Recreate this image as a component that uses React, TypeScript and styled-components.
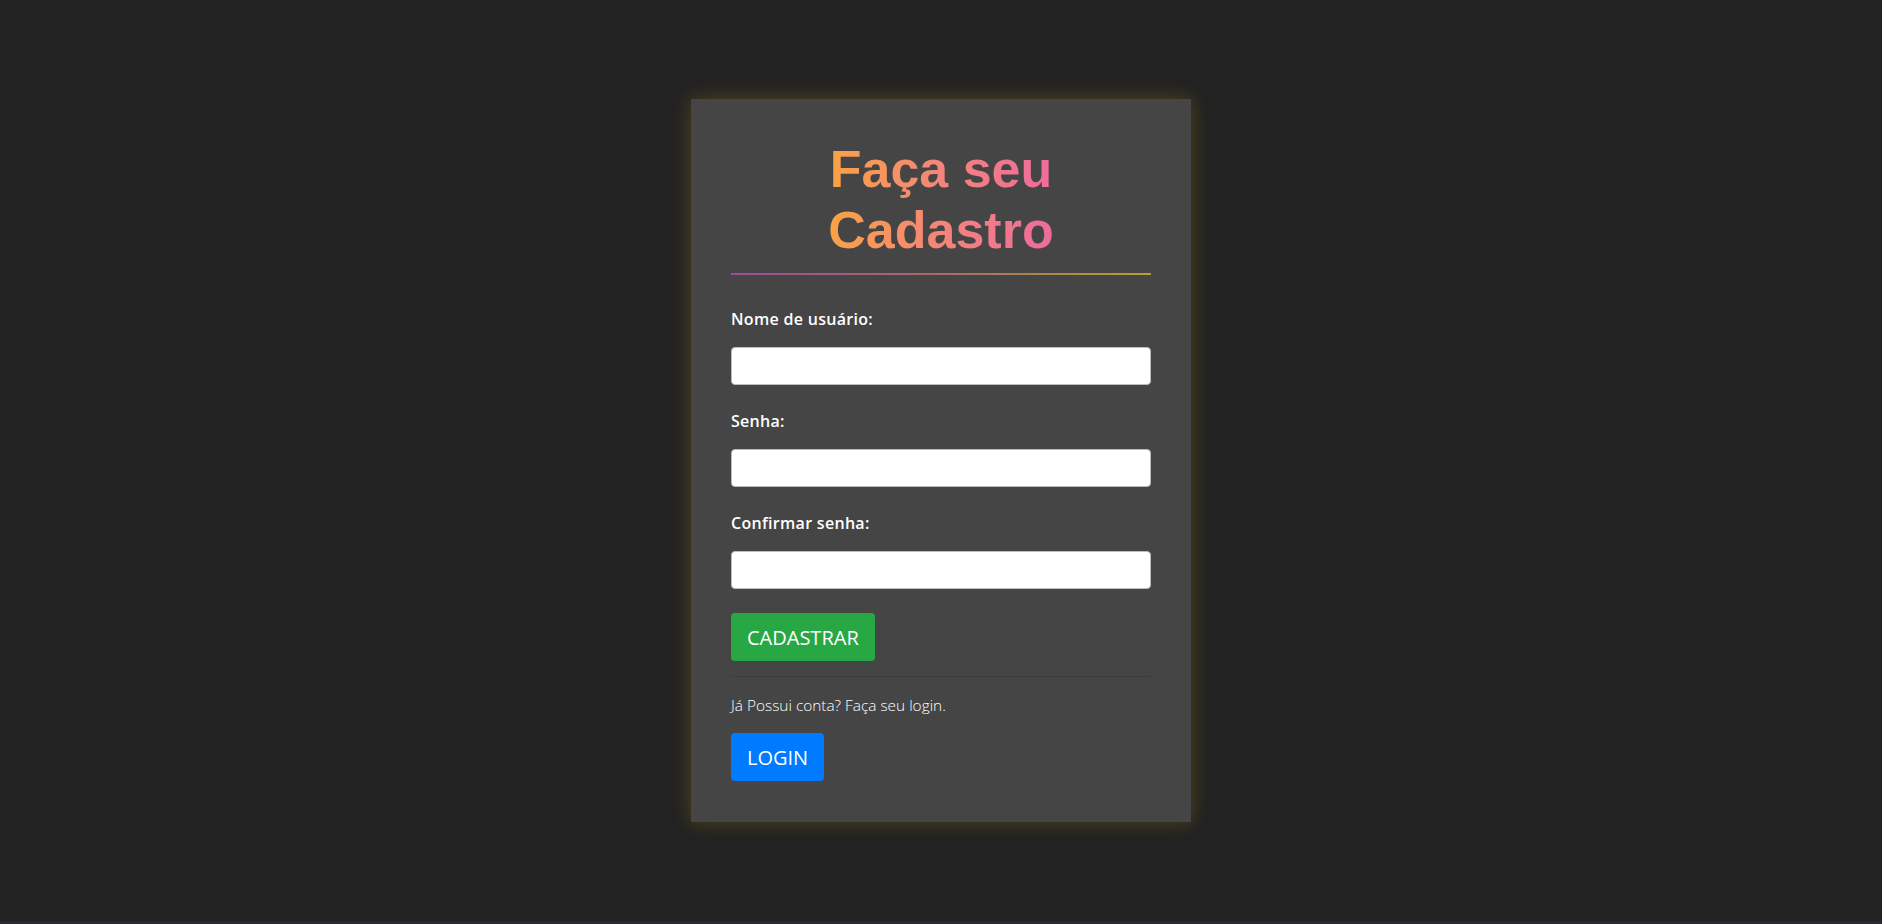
import React from "react";
import styled, { createGlobalStyle } from "styled-components";

const Global = createGlobalStyle`
  html, body { margin: 0; padding: 0; background: #2b2a33; }
  body { font-family: "Open Sans", "Noto Sans", sans-serif; }
  * { box-sizing: border-box; }
`;

const Page = styled.main`
  height: 921px;
  background: #222222;
  display: flex;
  align-items: center;
  justify-content: center;
`;

const Card = styled.section`
  width: 500px;
  padding: 40px 40px 41px;
  background: #454545;
  box-shadow: 0 0 18px rgba(255, 204, 0, 0.22);
  display: flex;
  flex-direction: column;
`;

const Title = styled.h1`
  margin: 0 auto;
  width: fit-content;
  max-width: 300px;
  font-family: "Liberation Sans", Arial, sans-serif;
  font-weight: 700;
  font-size: 52px;
  line-height: 61px;
  text-align: center;
  background: linear-gradient(90deg, #fbad33 0%, #f3857a 50%, #ec63a9 100%);
  -webkit-background-clip: text;
  background-clip: text;
  color: transparent;
`;

const TitleRule = styled.div`
  height: 2px;
  margin-top: 12px;
  margin-bottom: 32px;
  background: linear-gradient(90deg, #9c4d99 0%, #a86a6a 50%, #b5a12c 100%);
`;

const Field = styled.div`
  display: flex;
  flex-direction: column;
  margin-bottom: 24px;
`;

const Label = styled.label`
  color: #ffffff;
  font-size: 16px;
  line-height: 24px;
  font-weight: 600;
  letter-spacing: 0.3px;
  margin-bottom: 16px;
`;

const Input = styled.input`
  height: 38px;
  width: 100%;
  border: 1px solid #b9bdc2;
  border-radius: 4px;
  background: #ffffff;
  padding: 6px 12px;
  font-size: 16px;
  outline: none;
`;

const Button = styled.button<{ $tone: "green" | "blue" }>`
  align-self: flex-start;
  height: 48px;
  padding: 0 16px;
  border: none;
  border-radius: 4px;
  background: ${(p) => (p.$tone === "green" ? "#28a745" : "#007bff")};
  color: #ffffff;
  font-family: "Open Sans", "Noto Sans", sans-serif;
  font-size: 20px;
  font-weight: 400;
  cursor: pointer;
`;

const Divider = styled.hr`
  margin: 15px 0 18px;
  border: 0;
  border-top: 1px solid rgba(0, 0, 0, 0.1);
`;

const Hint = styled.p`
  margin: 0 0 16px;
  color: #ffffff;
  font-size: 15.4px;
  line-height: 22px;
  font-weight: 300;
`;

export default function App() {
  return (
    <>
      <Global />
      <Page>
        <Card>
          <Title>Faça seu Cadastro</Title>
          <TitleRule />
          <Field>
            <Label htmlFor="user">Nome de usuário:</Label>
            <Input id="user" type="text" />
          </Field>
          <Field>
            <Label htmlFor="pass">Senha:</Label>
            <Input id="pass" type="password" />
          </Field>
          <Field>
            <Label htmlFor="confirm">Confirmar senha:</Label>
            <Input id="confirm" type="password" />
          </Field>
          <Button $tone="green">CADASTRAR</Button>
          <Divider />
          <Hint>Já Possui conta? Faça seu login.</Hint>
          <Button $tone="blue">LOGIN</Button>
        </Card>
      </Page>
    </>
  );
}
